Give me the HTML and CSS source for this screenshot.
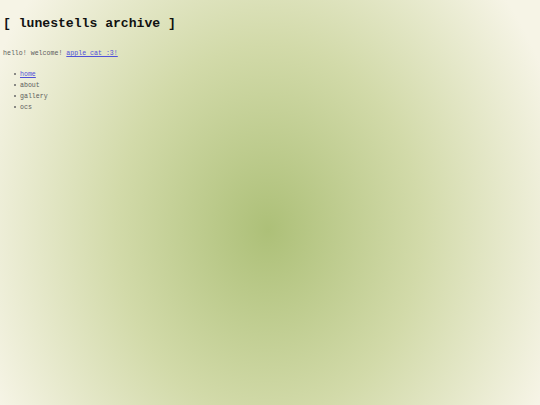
FILE: index.html
```html
<!DOCTYPE html>
<html>
<head>
<meta charset="utf-8">
<title>lunestells archive</title>
<link rel="stylesheet" href="styles.css">
</head>
<body>
<h1 class="title">[ lunestells archive ]</h1>
<p class="intro">hello! welcome! <a href="#">apple cat :3!</a></p>
<ul class="nav">
<li><a href="#">home</a></li>
<li>about</li>
<li>gallery</li>
<li>ocs</li>
</ul>
</body>
</html>
```
FILE: styles.css
```css
html {
  min-height: 100%;
  background: radial-gradient(ellipse 305px 370px at 268px 230px, #adc078 0%, #d2daa9 50%, #f6f4e6 100%);
  background-color: #f6f4e6;
}
body {
  margin: 0;
  padding: 15px 3px 0 3px;
  font-family: "Liberation Mono", monospace;
  font-size: 6.6px;
  color: #5c5c5c;
}
.title {
  margin: 0;
  font-size: 13.1px;
  line-height: 17px;
  color: #111;
  font-weight: bold;
}
.intro {
  margin: 16px 0 0 0;
  line-height: 11px;
}
a {
  color: #5050d8;
}
.nav {
  margin: 10px 0 0 0;
  padding-left: 17px;
  line-height: 11px;
  list-style: none;
}
.nav li::before {
  content: "";
  display: inline-block;
  width: 2px;
  height: 2px;
  border-radius: 50%;
  background: #666;
  margin-left: -6px;
  margin-right: 4px;
  vertical-align: 1px;
}
```
